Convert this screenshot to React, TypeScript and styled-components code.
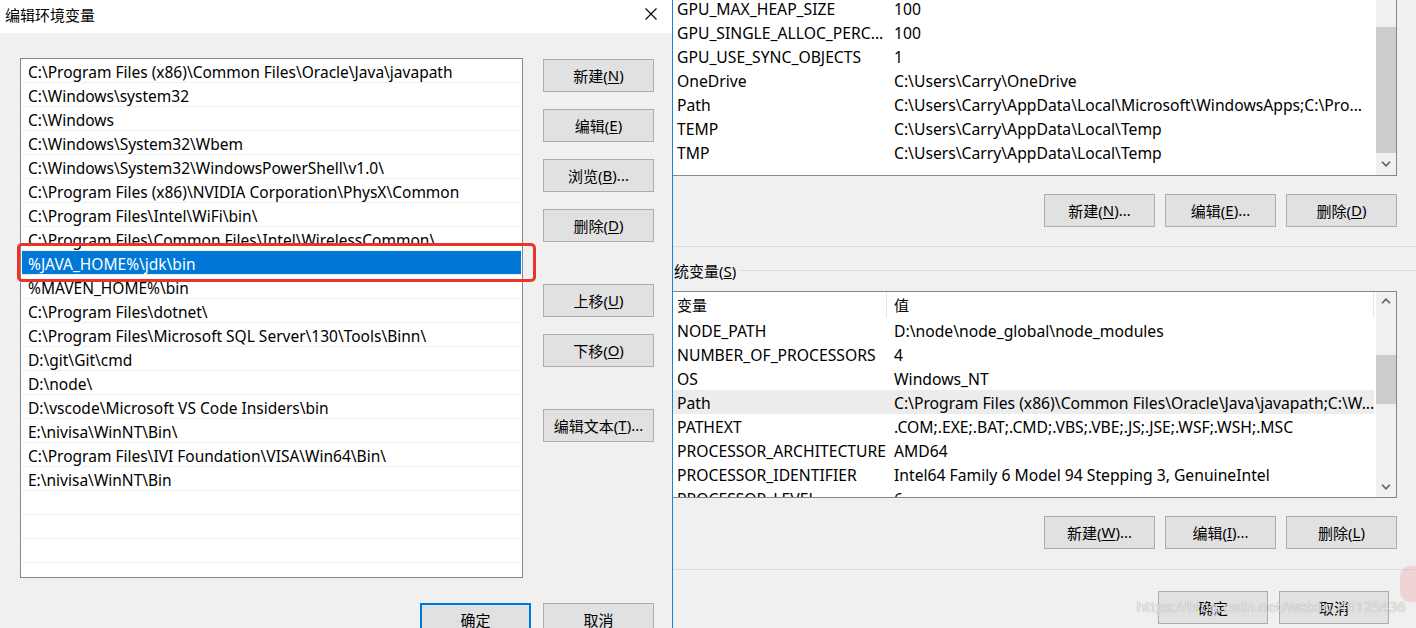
import React from "react";
import styled, { createGlobalStyle } from "styled-components";

const GlobalStyle = createGlobalStyle`
  html, body { margin: 0; padding: 0; background: #f0f0f0; }
  body { font-family: "Noto Sans", "Noto Sans CJK SC", sans-serif; color: #000; }
  #root { width: 1416px; height: 628px; overflow: hidden; }
  * { box-sizing: border-box; }
`;

const Screen = styled.div`
  display: flex;
  width: 1416px;
  height: 628px;
  overflow: hidden;
  position: relative;
  font-size: 15px;
`;

/* ---------- left dialog ---------- */
const EditDialog = styled.section`
  width: 673px;
  flex: none;
  display: flex;
  flex-direction: column;
  border-right: 1px solid #1883d7;
  background: #f0f0f0;
  position: relative;
  z-index: 1;
`;

const TitleBar = styled.header`
  height: 33px;
  flex: none;
  background: #fff;
  display: flex;
  align-items: center;
  justify-content: space-between;
  padding: 0 15px 5px 5px;
  font-size: 15px;
`;

const CloseIcon = styled.svg`
  display: block;
`;

const DialogBody = styled.div`
  flex: 1;
  display: flex;
  flex-direction: column;
  padding: 25px 18px 0 20px;
`;

const BodyRow = styled.div`
  display: flex;
  gap: 20px;
  align-items: flex-start;
`;

const PathList = styled.div`
  width: 504px;
  height: 520px;
  border: 1px solid #828790;
  background: #fff;
  overflow: hidden;
  padding: 0 1px;
`;

const PathRow = styled.div<{ $selected?: boolean }>`
  height: 24px;
  border-bottom: 1px solid #f0f0f0;
  padding-left: 6px;
  padding-top: 2px;
  display: flex;
  align-items: center;
  white-space: nowrap;
  overflow: hidden;
  font-size: 15.5px;
  color: ${(p) => (p.$selected ? "#fff" : "#000")};
  background: ${(p) => (p.$selected ? "#0078d7" : "#fff")};
`;

const SideButtons = styled.div`
  width: 111px;
  flex: none;
  display: flex;
  flex-direction: column;
  gap: 17px;
  padding-top: 1px;
`;

const WinButton = styled.button<{ $default?: boolean; $spaced?: boolean; $w?: number }>`
  width: ${(p) => p.$w ?? 111}px;
  height: 33px;
  flex: none;
  margin: ${(p) => (p.$spaced ? "25px 0 0 0" : "0")};
  background: #e1e1e1;
  border: ${(p) => (p.$default ? "2px solid #0078d7" : "1px solid #adadad")};
  font-family: "Noto Sans", "Noto Sans CJK SC", sans-serif;
  font-size: 15px;
  color: #000;
  padding: 0 0 1px 0;
  display: flex;
  align-items: center;
  justify-content: center;
  white-space: nowrap;
  u {
    text-underline-offset: 2px;
  }
`;

const DialogFooter = styled.div`
  display: flex;
  justify-content: flex-end;
  gap: 12px;
  margin-top: 25px;
`;

const Annotation = styled.div`
  position: absolute;
  left: 17px;
  top: 243px;
  width: 519px;
  height: 39px;
  border: 3px solid #ea3329;
  border-radius: 5px;
  pointer-events: none;
`;

/* ---------- right window ---------- */
const EnvWindow = styled.section`
  flex: 1;
  min-width: 0;
  overflow: hidden;
  background: #f0f0f0;
  position: relative;
`;

const EnvContent = styled.div`
  margin-left: -18px;
  padding: 0 19px 0 14px;
  display: flex;
  flex-direction: column;
`;

const ListView = styled.div<{ $height: number; $noTop?: boolean; $top?: number }>`
  height: ${(p) => p.$height}px;
  flex: none;
  margin-top: ${(p) => p.$top ?? 0}px;
  border: 1px solid #828790;
  ${(p) => (p.$noTop ? "border-top: none;" : "")}
  background: #fff;
  display: flex;
  overflow: hidden;
`;

const ListColumn = styled.div<{ $offset?: number }>`
  flex: 1;
  min-width: 0;
  display: flex;
  flex-direction: column;
  margin-top: ${(p) => p.$offset ?? 0}px;
`;

const HeaderRow = styled.div`
  height: 26px;
  flex: none;
  display: flex;
  margin-right: 2px;
`;

const HeaderCell = styled.div<{ $w?: number }>`
  ${(p) => (p.$w ? `width: ${p.$w}px; flex: none;` : "flex: 1;")}
  padding-left: 7px;
  padding-bottom: 2px;
  display: flex;
  align-items: center;
  border-right: 1px solid #e5e5e5;
`;

const EnvRow = styled.div<{ $hover?: boolean }>`
  height: 24px;
  flex: none;
  display: flex;
  align-items: center;
  white-space: nowrap;
  margin-right: 2px;
  padding-top: 1px;
  font-size: 15.7px;
  background: ${(p) => (p.$hover ? "#ececec" : "transparent")};
`;

const NameCell = styled.div`
  width: 217px;
  flex: none;
  padding-left: 7px;
  overflow: hidden;
`;

const ValueCell = styled.div`
  flex: 1;
  min-width: 0;
  padding-left: 7px;
  overflow: hidden;
`;

const Scrollbar = styled.div`
  width: 20px;
  flex: none;
  background: #f0f0f0;
  display: flex;
  flex-direction: column;
`;

const ScrollArrow = styled.div<{ $h?: number }>`
  height: ${(p) => p.$h ?? 17}px;
  flex: none;
  display: flex;
  align-items: center;
  justify-content: center;
`;

const TrackGap = styled.div<{ $h?: number }>`
  ${(p) => (p.$h !== undefined ? `height: ${p.$h}px; flex: none;` : "flex: 1;")}
`;

const Thumb = styled.div<{ $h: number }>`
  height: ${(p) => p.$h}px;
  flex: none;
  background: #cdcdcd;
`;

const ButtonRow = styled.div<{ $top: number; $right?: number; $gap?: number }>`
  display: flex;
  justify-content: flex-end;
  gap: ${(p) => p.$gap ?? 10}px;
  margin-top: ${(p) => p.$top}px;
  margin-right: ${(p) => p.$right ?? 0}px;
`;

const GroupLine = styled.div<{ $top: number }>`
  height: 1px;
  flex: none;
  background: #dcdcdc;
  margin: ${(p) => p.$top}px -19px 0 -14px;
`;

const GroupHeader = styled.div`
  height: 18px;
  margin-top: 14px;
  margin-left: -10px;
  display: flex;
  align-items: center;
  white-space: nowrap;
`;

const GroupHeaderRule = styled.div`
  flex: 1;
  height: 1px;
  background: #dcdcdc;
  margin: 0 -19px 0 3px;
`;

const Watermark = styled.div`
  position: absolute;
  right: 10px;
  top: 596px;
  font-size: 14.8px;
  color: rgba(255, 255, 255, 0.8);
  text-shadow: 0 0 1px rgba(0, 0, 0, 0.45);
  white-space: nowrap;
  pointer-events: none;
`;

const FloatTab = styled.div`
  position: absolute;
  right: 0;
  top: 566px;
  width: 16px;
  height: 36px;
  border-radius: 10px 0 0 10px;
  background: rgba(240, 160, 160, 0.35);
`;

const Chevron = ({ up }: { up?: boolean }) => (
  <svg width="10" height="6" viewBox="0 0 10 6">
    <polyline
      points={up ? "1,5.2 5,1.2 9,5.2" : "1,0.8 5,4.8 9,0.8"}
      fill="none"
      stroke="#606060"
      strokeWidth="1.6"
    />
  </svg>
);

const paths = [
  "C:\\Program Files (x86)\\Common Files\\Oracle\\Java\\javapath",
  "C:\\Windows\\system32",
  "C:\\Windows",
  "C:\\Windows\\System32\\Wbem",
  "C:\\Windows\\System32\\WindowsPowerShell\\v1.0\\",
  "C:\\Program Files (x86)\\NVIDIA Corporation\\PhysX\\Common",
  "C:\\Program Files\\Intel\\WiFi\\bin\\",
  "C:\\Program Files\\Common Files\\Intel\\WirelessCommon\\",
  "%JAVA_HOME%\\jdk\\bin",
  "%MAVEN_HOME%\\bin",
  "C:\\Program Files\\dotnet\\",
  "C:\\Program Files\\Microsoft SQL Server\\130\\Tools\\Binn\\",
  "D:\\git\\Git\\cmd",
  "D:\\node\\",
  "D:\\vscode\\Microsoft VS Code Insiders\\bin",
  "E:\\nivisa\\WinNT\\Bin\\",
  "C:\\Program Files\\IVI Foundation\\VISA\\Win64\\Bin\\",
  "E:\\nivisa\\WinNT\\Bin",
  "",
  "",
  "",
  "",
];

const userVars: [string, string][] = [
  ["GPU_MAX_HEAP_SIZE", "100"],
  ["GPU_SINGLE_ALLOC_PERC...", "100"],
  ["GPU_USE_SYNC_OBJECTS", "1"],
  ["OneDrive", "C:\\Users\\Carry\\OneDrive"],
  ["Path", "C:\\Users\\Carry\\AppData\\Local\\Microsoft\\WindowsApps;C:\\Pro..."],
  ["TEMP", "C:\\Users\\Carry\\AppData\\Local\\Temp"],
  ["TMP", "C:\\Users\\Carry\\AppData\\Local\\Temp"],
];

const sysVars: [string, string][] = [
  ["NODE_PATH", "D:\\node\\node_global\\node_modules"],
  ["NUMBER_OF_PROCESSORS", "4"],
  ["OS", "Windows_NT"],
  ["Path", "C:\\Program Files (x86)\\Common Files\\Oracle\\Java\\javapath;C:\\W..."],
  ["PATHEXT", ".COM;.EXE;.BAT;.CMD;.VBS;.VBE;.JS;.JSE;.WSF;.WSH;.MSC"],
  ["PROCESSOR_ARCHITECTURE", "AMD64"],
  ["PROCESSOR_IDENTIFIER", "Intel64 Family 6 Model 94 Stepping 3, GenuineIntel"],
  ["PROCESSOR_LEVEL", "6"],
];

export default function App() {
  return (
    <>
      <GlobalStyle />
      <Screen>
        <EditDialog>
          <TitleBar>
            <span>编辑环境变量</span>
            <CloseIcon width="12" height="12" viewBox="0 0 12 12">
              <path d="M0.5 0.5 L11.5 11.5 M11.5 0.5 L0.5 11.5" stroke="#000" strokeWidth="1.1" />
            </CloseIcon>
          </TitleBar>
          <DialogBody>
            <BodyRow>
              <PathList>
                {paths.map((p, i) => (
                  <PathRow key={i} $selected={i === 8}>
                    {p}
                  </PathRow>
                ))}
              </PathList>
              <SideButtons>
                <WinButton>
                  新建(<u>N</u>)
                </WinButton>
                <WinButton>
                  编辑(<u>E</u>)
                </WinButton>
                <WinButton>
                  浏览(<u>B</u>)...
                </WinButton>
                <WinButton>
                  删除(<u>D</u>)
                </WinButton>
                <WinButton $spaced>
                  上移(<u>U</u>)
                </WinButton>
                <WinButton>
                  下移(<u>O</u>)
                </WinButton>
                <WinButton $spaced>
                  编辑文本(<u>T</u>)...
                </WinButton>
              </SideButtons>
            </BodyRow>
            <DialogFooter>
              <WinButton $default>确定</WinButton>
              <WinButton>取消</WinButton>
            </DialogFooter>
          </DialogBody>
          <Annotation />
        </EditDialog>

        <EnvWindow>
          <EnvContent>
            <ListView $height={176} $noTop>
              <ListColumn $offset={-4}>
                {userVars.map(([n, v]) => (
                  <EnvRow key={n}>
                    <NameCell>{n}</NameCell>
                    <ValueCell>{v}</ValueCell>
                  </EnvRow>
                ))}
              </ListColumn>
              <Scrollbar>
                <TrackGap $h={27} />
                <Thumb $h={126} />
                <TrackGap />
                <ScrollArrow $h={22}>
                  <Chevron />
                </ScrollArrow>
              </Scrollbar>
            </ListView>

            <ButtonRow $top={18}>
              <WinButton>
                新建(<u>N</u>)...
              </WinButton>
              <WinButton>
                编辑(<u>E</u>)...
              </WinButton>
              <WinButton>
                删除(<u>D</u>)
              </WinButton>
            </ButtonRow>

            <GroupLine $top={19} />
            <GroupHeader>
              <span>
                系统变量(<u>S</u>)
              </span>
              <GroupHeaderRule />
            </GroupHeader>

            <ListView $height={207} $top={12}>
              <ListColumn>
                <HeaderRow>
                  <HeaderCell $w={217}>变量</HeaderCell>
                  <HeaderCell>值</HeaderCell>
                </HeaderRow>
                {sysVars.map(([n, v]) => (
                  <EnvRow key={n} $hover={n === "Path"}>
                    <NameCell>{n}</NameCell>
                    <ValueCell>{v}</ValueCell>
                  </EnvRow>
                ))}
              </ListColumn>
              <Scrollbar>
                <ScrollArrow>
                  <Chevron up />
                </ScrollArrow>
                <TrackGap $h={46} />
                <Thumb $h={49} />
                <TrackGap />
                <ScrollArrow $h={20}>
                  <Chevron />
                </ScrollArrow>
              </Scrollbar>
            </ListView>

            <ButtonRow $top={18}>
              <WinButton>
                新建(<u>W</u>)...
              </WinButton>
              <WinButton>
                编辑(<u>I</u>)...
              </WinButton>
              <WinButton>
                删除(<u>L</u>)
              </WinButton>
            </ButtonRow>

            <GroupLine $top={20} />

            <ButtonRow $top={21} $right={8} $gap={11}>
              <WinButton $w={110}>确定</WinButton>
              <WinButton $w={110}>取消</WinButton>
            </ButtonRow>
          </EnvContent>
          <FloatTab />
          <Watermark>https://blog.csdn.net/weixin_46125436</Watermark>
        </EnvWindow>
      </Screen>
    </>
  );
}
